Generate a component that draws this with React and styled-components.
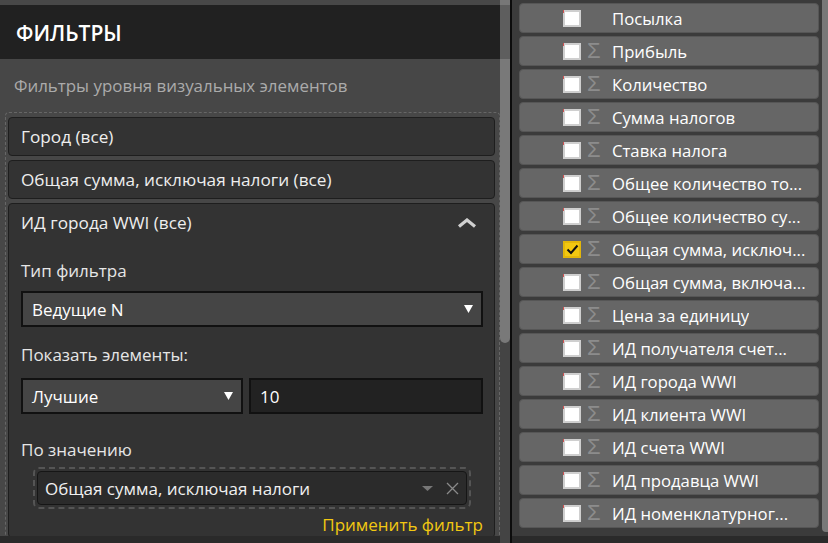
import React from "react";
import styled, { createGlobalStyle } from "styled-components";

const GlobalStyle = createGlobalStyle`
  html, body {
    margin: 0;
    padding: 0;
    background: #2a2a2a;
  }
  body {
    font-family: "Open Sans", "Noto Sans", sans-serif;
  }
  * {
    box-sizing: border-box;
  }
`;

const fields = [
  { name: "Посылка", sum: false },
  { name: "Прибыль", sum: true },
  { name: "Количество", sum: true },
  { name: "Сумма налогов", sum: true },
  { name: "Ставка налога", sum: true },
  { name: "Общее количество то...", sum: true },
  { name: "Общее количество су...", sum: true },
  { name: "Общая сумма, исключ...", sum: true, checked: true },
  { name: "Общая сумма, включа...", sum: true },
  { name: "Цена за единицу", sum: true },
  { name: "ИД получателя счет...", sum: true },
  { name: "ИД города WWI", sum: true },
  { name: "ИД клиента WWI", sum: true },
  { name: "ИД счета WWI", sum: true },
  { name: "ИД продавца WWI", sum: true },
  { name: "ИД номенклатурног...", sum: true },
];

const Triangle = ({ color = "#fff", w = 9, h = 8 }) => (
  <svg width={w} height={h} viewBox={`0 0 ${w} ${h}`}>
    <polygon points={`0,0 ${w},0 ${w / 2},${h}`} fill={color} />
  </svg>
);

const ChevronUp = () => (
  <svg width="20" height="10" viewBox="0 0 20 10">
    <polyline points="2,8.5 10,2 18,8.5" fill="none" stroke="#d0d0d0" strokeWidth="3.2" />
  </svg>
);

const CloseX = () => (
  <svg width="13" height="13" viewBox="0 0 13 13">
    <path d="M1 1 L12 12 M12 1 L1 12" stroke="#8a8a8a" strokeWidth="1.3" fill="none" />
  </svg>
);

const Tick = () => (
  <svg width="13" height="11" viewBox="0 0 13 11">
    <polyline points="1.5,5.5 5,9 11.5,1.5" fill="none" stroke="#111" strokeWidth="2" />
  </svg>
);

export default function App() {
  return (
    <>
      <GlobalStyle />
      <Frame>
        <LeftPanel>
          <LeftContent>
            <TopStrip />
            <Header>
              <Title>ФИЛЬТРЫ</Title>
            </Header>
            <Section>
              <Subtitle>Фильтры уровня визуальных элементов</Subtitle>
              <Well>
                <Card>
                  <CardHead>Город (все)</CardHead>
                </Card>
                <Card>
                  <CardHead>Общая сумма, исключая налоги (все)</CardHead>
                </Card>
                <Card>
                  <CardHead>
                    ИД города WWI (все)
                    <ChevronUp />
                  </CardHead>
                  <CardBody>
                    <Label $top={17} $bottom={8}>Тип фильтра</Label>
                    <Select>
                      Ведущие N
                      <Triangle />
                    </Select>
                    <Label $top={16} $bottom={11}>Показать элементы:</Label>
                    <Row>
                      <Select $width="222px">
                        Лучшие
                        <Triangle />
                      </Select>
                      <NumberInput>10</NumberInput>
                    </Row>
                    <Label $top={24} $bottom={5}>По значению</Label>
                    <ValueOutline>
                      <ValueField>
                        <span>Общая сумма, исключая налоги</span>
                        <ValueIcons>
                          <Triangle color="#777" w={11} h={5} />
                          <CloseX />
                        </ValueIcons>
                      </ValueField>
                    </ValueOutline>
                    <Apply>Применить фильтр</Apply>
                  </CardBody>
                </Card>
              </Well>
            </Section>
            <BottomBand />
          </LeftContent>
          <ScrollTrack>
            <LeftThumb />
          </ScrollTrack>
        </LeftPanel>

        <RightPanel>
          <RightMain>
            <FieldList>
              {fields.map((f) => (
                <FieldItem key={f.name}>
                  <CheckBox $checked={f.checked}>{f.checked && <Tick />}</CheckBox>
                  <Sigma>{f.sum ? "Σ" : ""}</Sigma>
                  <FieldName>{f.name}</FieldName>
                </FieldItem>
              ))}
            </FieldList>
            <RightThumb />
          </RightMain>
          <BottomBand />
        </RightPanel>
      </Frame>
    </>
  );
}

const Frame = styled.div`
  display: flex;
  width: 828px;
  height: 543px;
  overflow: hidden;
`;

const LeftPanel = styled.div`
  display: flex;
  width: 510px;
  height: 100%;
`;

const LeftContent = styled.div`
  display: flex;
  flex-direction: column;
  width: 500px;
  height: 100%;
`;

const TopStrip = styled.div`
  height: 5px;
  background: #484848;
`;

const Header = styled.div`
  height: 54px;
  background: #212121;
  display: flex;
  align-items: center;
  padding-left: 16px;
`;

const Title = styled.div`
  color: #fff;
  font-size: 21px;
  font-weight: 600;
  padding-top: 2px;
`;

const Section = styled.div`
  flex: 1;
  min-height: 0;
  overflow: hidden;
  background: #474747;
  padding-top: 15px;
`;

const Subtitle = styled.div`
  color: #ababab;
  font-size: 16.9px;
  line-height: 24px;
  padding-left: 14px;
  margin-bottom: 14px;
`;

const Well = styled.div`
  margin-left: 5px;
  border: 1px dashed #666;
  border-bottom: none;
  border-radius: 4px 4px 0 0;
  padding: 4px 4px 0 2px;
  display: flex;
  flex-direction: column;
  gap: 4px;
`;

const Card = styled.div`
  background: #333;
  border: 1px solid #1e1e1e;
  border-radius: 4px;
`;

const CardHead = styled.div`
  height: 37px;
  display: flex;
  align-items: center;
  justify-content: space-between;
  padding: 0 17px 0 12px;
  color: #eee;
  font-size: 17.2px;
`;

const CardBody = styled.div`
  display: flex;
  flex-direction: column;
  padding: 1px 11px 0 12px;
`;

const Label = styled.div`
  color: #e6e6e6;
  font-size: 17px;
  line-height: 24px;
  margin-top: ${(p) => p.$top}px;
  margin-bottom: ${(p) => p.$bottom}px;
`;

const Select = styled.div`
  width: ${(p) => p.$width || "100%"};
  height: 36px;
  background: #454545;
  border: 2px solid #111;
  display: flex;
  align-items: center;
  justify-content: space-between;
  padding: 0 8px 0 9px;
  color: #fff;
  font-size: 17px;
`;

const Row = styled.div`
  display: flex;
  gap: 6px;
`;

const NumberInput = styled.div`
  flex: 1;
  height: 36px;
  background: #222;
  border: 2px solid #111;
  display: flex;
  align-items: center;
  padding-left: 9px;
  color: #fff;
  font-size: 17px;
`;

const ValueOutline = styled.div`
  margin: 0 12px;
  height: 42px;
  padding: 2px;
  border: 2px dashed #555;
  border-radius: 6px;
`;

const ValueField = styled.div`
  height: 100%;
  background: #2b2b2b;
  border: 1px solid #161616;
  border-radius: 4px;
  display: flex;
  align-items: center;
  justify-content: space-between;
  padding: 0 7px 0 7px;
  color: #f0f0f0;
  font-size: 17px;
`;

const ValueIcons = styled.div`
  display: flex;
  align-items: center;
  gap: 13px;
`;

const Apply = styled.div`
  margin-top: 4px;
  align-self: flex-end;
  color: #f2c811;
  font-size: 17px;
  line-height: 24px;
`;

const BottomBand = styled.div`
  height: 7px;
  flex-shrink: 0;
  background: #2a2a2a;
`;

const ScrollTrack = styled.div`
  width: 10px;
  height: 100%;
  background: #444;
`;

const LeftThumb = styled.div`
  height: 343px;
  border-radius: 0 0 5px 5px;
  background: linear-gradient(#777 0 5px, #5e5e5e 5px 59px, #797979 59px);
`;

const RightPanel = styled.div`
  flex: 1;
  display: flex;
  flex-direction: column;
  border-left: 2px solid #0c0c0c;
  background: #3b3b3b;
`;

const RightMain = styled.div`
  flex: 1;
  display: flex;
`;

const FieldList = styled.div`
  width: 307px;
  display: flex;
  flex-direction: column;
  gap: 3px;
  padding: 3px 0 0 7px;
`;

const FieldItem = styled.div`
  height: 30px;
  background: #666;
  border: 1px solid #565656;
  border-radius: 4px;
  display: flex;
  align-items: center;
  padding: 0 4px 0 43px;
`;

const CheckBox = styled.span`
  position: relative;
  width: 18px;
  height: 17px;
  flex-shrink: 0;
  display: flex;
  align-items: center;
  justify-content: center;
  background: ${(p) => (p.$checked ? "#f2c811" : "#fff")};
  border: 2px solid ${(p) => (p.$checked ? "#e3b70a" : "#cfcfcf")};

  &::before {
    content: "";
    position: absolute;
    left: -2px;
    top: -2px;
    width: 1px;
    height: 3px;
    background: ${(p) => (p.$checked ? "transparent" : "#d05050")};
  }
`;

const Sigma = styled.span`
  width: 31px;
  flex-shrink: 0;
  padding-left: 6px;
  color: #8c8c8c;
  font-size: 22px;
  line-height: 20px;
  font-family: "Liberation Sans", sans-serif;
`;

const FieldName = styled.span`
  color: #fff;
  font-size: 16.7px;
  white-space: nowrap;
  overflow: hidden;
`;

const RightThumb = styled.div`
  margin-left: 3px;
  width: 6px;
  height: 532px;
  background: #787878;
  border-radius: 0 0 0 4px;
`;
